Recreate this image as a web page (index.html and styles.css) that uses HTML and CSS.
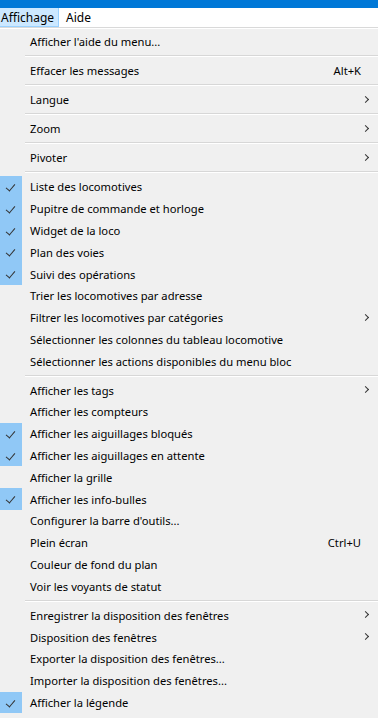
FILE: index.html
```html
<!DOCTYPE html>
<html lang="fr">
<head>
    <meta charset="UTF-8">
    <title>Affichage</title>
    <link rel="stylesheet" href="styles.css">
</head>
<body>
    <div class="titlebar"></div>
    <div class="menubar">
        <span class="menubar-item open">Affichage</span>
        <span class="menubar-item">Aide</span>
    </div>

    <div class="menu">
        <div class="item"><span class="label">Afficher l'aide du menu...</span></div>
        <div class="sep"></div>
        <div class="item"><span class="label">Effacer les messages</span><span class="shortcut">Alt+K</span></div>
        <div class="sep"></div>
        <div class="item sub"><span class="label">Langue</span></div>
        <div class="sep"></div>
        <div class="item sub"><span class="label">Zoom</span></div>
        <div class="sep"></div>
        <div class="item sub"><span class="label">Pivoter</span></div>
        <div class="sep"></div>

        <div class="item checked"><span class="label">Liste des locomotives</span></div>
        <div class="item checked"><span class="label">Pupitre de commande et horloge</span></div>
        <div class="item checked"><span class="label">Widget de la loco</span></div>
        <div class="item checked"><span class="label">Plan des voies</span></div>
        <div class="item checked"><span class="label">Suivi des opérations</span></div>
        <div class="item"><span class="label">Trier les locomotives par adresse</span></div>
        <div class="item sub"><span class="label">Filtrer les locomotives par catégories</span></div>
        <div class="item"><span class="label">Sélectionner les colonnes du tableau locomotive</span></div>
        <div class="item"><span class="label">Sélectionner les actions disponibles du menu bloc</span></div>
        <div class="sep"></div>

        <div class="item sub"><span class="label">Afficher les tags</span></div>
        <div class="item"><span class="label">Afficher les compteurs</span></div>
        <div class="item checked"><span class="label">Afficher les aiguillages bloqués</span></div>
        <div class="item checked"><span class="label">Afficher les aiguillages en attente</span></div>
        <div class="item"><span class="label">Afficher la grille</span></div>
        <div class="item checked"><span class="label">Afficher les info-bulles</span></div>
        <div class="item"><span class="label">Configurer la barre d'outils...</span></div>
        <div class="item"><span class="label">Plein écran</span><span class="shortcut">Ctrl+U</span></div>
        <div class="item"><span class="label">Couleur de fond du plan</span></div>
        <div class="item"><span class="label">Voir les voyants de statut</span></div>
        <div class="sep"></div>

        <div class="item sub"><span class="label">Enregistrer la disposition des fenêtres</span></div>
        <div class="item sub"><span class="label">Disposition des fenêtres</span></div>
        <div class="item"><span class="label">Exporter la disposition des fenêtres...</span></div>
        <div class="item"><span class="label">Importer la disposition des fenêtres...</span></div>
        <div class="item checked"><span class="label">Afficher la légende</span></div>
    </div>
</body>
</html>
```

FILE: styles.css
```css
body {
    margin: 0;
    font-family: "Noto Sans", sans-serif;
    font-size: 11.2px;
    color: #000;
    background: #f0f0f0;
    overflow: hidden;
}
.titlebar {
    height: 8px;
    background: #0078d7;
}
.menubar {
    display: flex;
    height: 19px;
    background: #fff;
    border-bottom: 1px solid #d9d9d9;
    font-size: 12px;
}
.menubar-item {
    display: flex;
    align-items: center;
    padding: 0 7px;
    line-height: 17px;
}
.menubar-item.open {
    padding: 0 4px 0 1px;
    background: #cce8ff;
    border: 1px solid #99d1ff;
    border-left: none;
    border-top: none;
}
.menu {
    background: #f0f0f0;
    border-top: 1px solid #fff;
    padding-top: 2px;
}
.item {
    position: relative;
    display: flex;
    align-items: center;
    height: 21.8px;
    padding-left: 30px;
    padding-right: 47px;
}
.item .label {
    flex: 1;
    white-space: nowrap;
}
.shortcut {
    margin-right: -30px;
}
.item.sub::after {
    content: "";
    position: absolute;
    right: 10px;
    top: 8px;
    width: 4px;
    height: 4px;
    border-right: 1px solid #333;
    border-bottom: 1px solid #333;
    transform: rotate(-45deg);
}
.item.checked::before {
    content: "";
    position: absolute;
    left: 0;
    top: 0;
    width: 22px;
    height: 21.8px;
    background: #90c8f6;
}
.item.checked::after {
    content: "";
    position: absolute;
    left: 8px;
    top: 6px;
    width: 4px;
    height: 8px;
    border-right: 1.3px solid #333;
    border-bottom: 1.3px solid #333;
    transform: rotate(40deg);
}
.sep {
    height: 1px;
    margin: 2.6px 0 2.6px 25px;
    background: #d7d7d7;
    border-bottom: 1px solid #fff;
}
```
